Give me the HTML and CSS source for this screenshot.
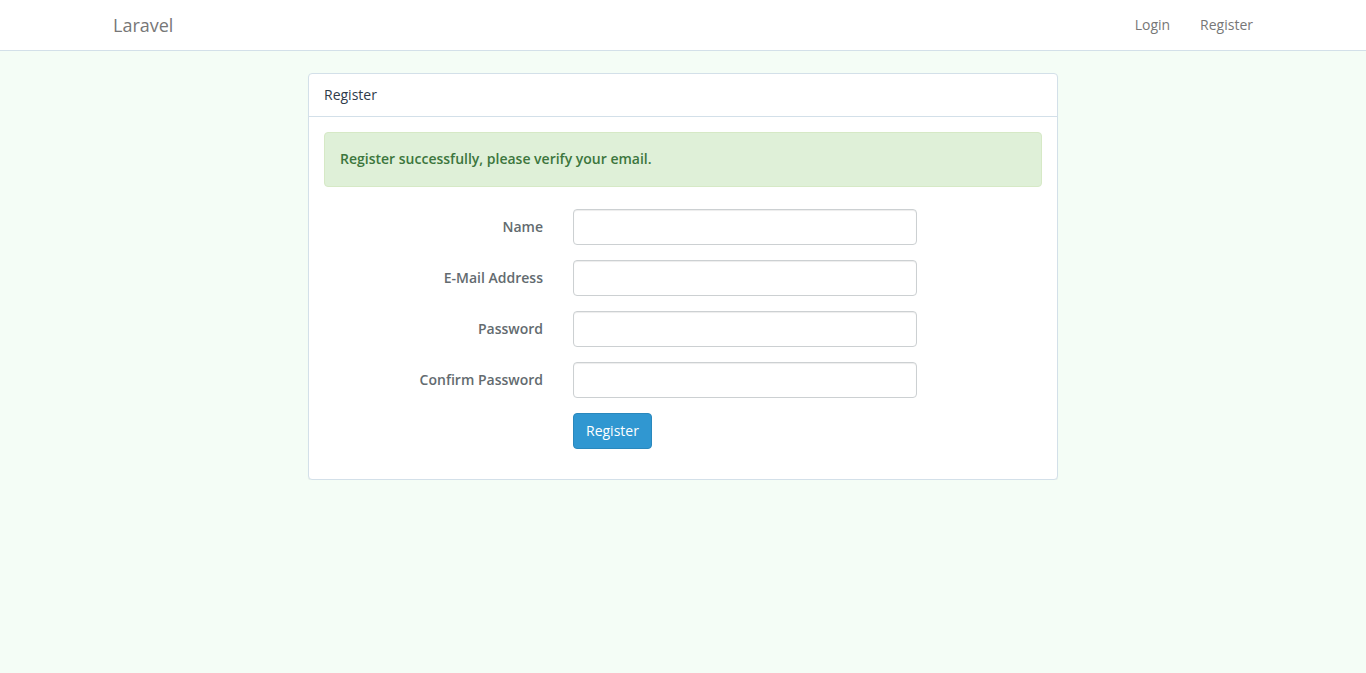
FILE: index.html
```html
<!DOCTYPE html>
<html lang="en">
<head>
    <meta charset="UTF-8">
    <meta name="viewport" content="width=device-width, initial-scale=1.0">
    <title>Laravel</title>
    <link rel="stylesheet" href="styles.css">
</head>
<body>
    <nav class="navbar">
        <div class="container navbar-inner">
            <a class="navbar-brand" href="#">Laravel</a>
            <ul class="nav">
                <li><a href="#">Login</a></li>
                <li><a href="#">Register</a></li>
            </ul>
        </div>
    </nav>

    <div class="container">
        <div class="panel">
            <div class="panel-heading">Register</div>
            <div class="panel-body">
                <div class="alert">Register successfully, please verify your email.</div>

                <form class="form-horizontal">
                    <div class="form-group">
                        <label class="control-label" for="name">Name</label>
                        <div class="field"><input id="name" type="text" class="form-control"></div>
                    </div>
                    <div class="form-group">
                        <label class="control-label" for="email">E-Mail Address</label>
                        <div class="field"><input id="email" type="email" class="form-control"></div>
                    </div>
                    <div class="form-group">
                        <label class="control-label" for="password">Password</label>
                        <div class="field"><input id="password" type="password" class="form-control"></div>
                    </div>
                    <div class="form-group">
                        <label class="control-label" for="password-confirm">Confirm Password</label>
                        <div class="field"><input id="password-confirm" type="password" class="form-control"></div>
                    </div>
                    <div class="form-group">
                        <span class="control-label"></span>
                        <div class="field">
                            <button type="submit" class="btn btn-primary">Register</button>
                        </div>
                    </div>
                </form>
            </div>
        </div>
    </div>
</body>
</html>
```

FILE: styles.css
```css
* {
    box-sizing: border-box;
}

body {
    margin: 0;
    font-family: "Open Sans", Lato, sans-serif;
    font-size: 14px;
    line-height: 1.6;
    color: #636b6f;
    background: #f4fdf6;
}

a {
    text-decoration: none;
}

.container {
    width: 1170px;
    margin: 0 auto;
    padding: 0 15px;
}

.navbar {
    background: #fff;
    border-bottom: 1px solid #d3e0e9;
    margin-bottom: 22px;
}

.navbar-inner {
    display: flex;
    justify-content: space-between;
    height: 50px;
}

.navbar-brand {
    margin-left: -15px;
    padding: 14px 15px;
    font-size: 18px;
    line-height: 22px;
    color: #777;
}

.nav {
    display: flex;
    margin: 0 -15px 0 0;
    padding: 0;
    list-style: none;
}

.nav a {
    display: block;
    padding: 14px 15px;
    line-height: 22px;
    color: #777;
}

.panel {
    width: 750px;
    margin-left: 195px;
    background: #fff;
    border: 1px solid #d3e0e9;
    border-radius: 4px;
    box-shadow: 0 1px 1px rgba(0, 0, 0, 0.05);
}

.panel-heading {
    padding: 10px 15px;
    color: #2f3b4a;
    border-bottom: 1px solid #d3e0e9;
}

.panel-body {
    padding: 15px;
}

.alert {
    padding: 15px;
    margin-bottom: 22px;
    background: #dff0d8;
    border: 1px solid #d6e9c6;
    border-radius: 4px;
    color: #3c763d;
    font-weight: 600;
}

.form-group {
    display: flex;
    margin-bottom: 15px;
}

.control-label {
    width: 219px;
    margin-right: 30px;
    padding-top: 7px;
    text-align: right;
    font-weight: 600;
}

.field {
    width: 344px;
}

.form-control {
    display: block;
    width: 100%;
    height: 36px;
    padding: 6px 12px;
    font: inherit;
    color: #555;
    background: #fff;
    border: 1px solid #ccd0d2;
    border-radius: 4px;
    box-shadow: inset 0 1px 1px rgba(0, 0, 0, 0.075);
}

.btn {
    padding: 6px 12px;
    font: inherit;
    line-height: 1.6;
    border: 1px solid transparent;
    border-radius: 4px;
    cursor: pointer;
}

.btn-primary {
    color: #fff;
    background: #3097d1;
    border-color: #2a88bd;
}
```
